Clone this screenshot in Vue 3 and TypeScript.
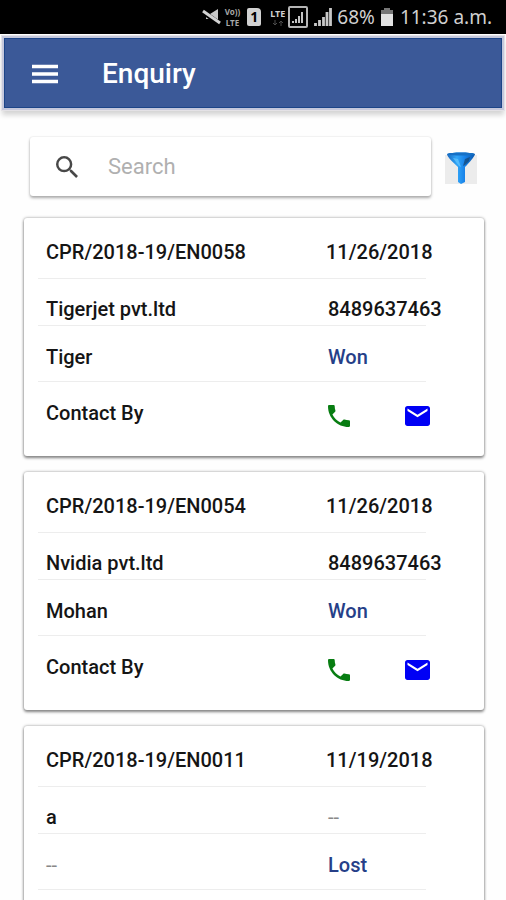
<script setup lang="ts">
import { ref } from 'vue'

interface Enquiry {
  code: string
  date: string
  company: string
  phone: string
  person: string
  status: string
}

const query = ref('')

const enquiries: Enquiry[] = [
  { code: 'CPR/2018-19/EN0058', date: '11/26/2018', company: 'Tigerjet pvt.ltd', phone: '8489637463', person: 'Tiger', status: 'Won' },
  { code: 'CPR/2018-19/EN0054', date: '11/26/2018', company: 'Nvidia pvt.ltd', phone: '8489637463', person: 'Mohan', status: 'Won' },
  { code: 'CPR/2018-19/EN0011', date: '11/19/2018', company: 'a', phone: '--', person: '--', status: 'Lost' },
]
</script>

<template>
  <div class="screen">
    <div class="status-bar">
      <svg class="mute" width="20" height="18" viewBox="0 0 20 18" aria-hidden="true">
        <path d="M4 6h4l8-5v14l-8-4H4z" fill="#c9c9c9" />
        <path d="M1 4l17 12" stroke="#000" stroke-width="5" />
        <path d="M1 3l17 12" stroke="#d2d2d2" stroke-width="3" />
      </svg>
      <span class="network volte"><span>Vo))</span><span>LTE</span></span>
      <span class="sim">1</span>
      <span class="network lte"><span>LTE</span>
        <svg width="12" height="6" viewBox="0 0 12 6" aria-hidden="true">
          <path d="M3 0v5M1 3l2 2 2-2M9 6V1M7 3l2-2 2 2" stroke="#4c4c4c" fill="none" />
        </svg>
      </span>
      <svg class="boxed" width="20" height="22" viewBox="0 0 20 22" aria-hidden="true">
        <rect x="1" y="1" width="18" height="20" rx="1" fill="none" stroke="#b5b5b5" stroke-width="2" />
        <path d="M5 17v-2M8 17v-4M11 17v-7M14 17V6" stroke="#c4c4c4" stroke-width="2" />
      </svg>
      <svg class="signal" width="18" height="18" viewBox="0 0 18 18" aria-hidden="true">
        <path d="M1.5 18v-3M5.500 18v-6M9.500 18V9M13 18V4M16.500 18V0" stroke="#c8c8c8" stroke-width="2.800" />
      </svg>
      <span class="percent">68%</span>
      <svg class="battery" width="12" height="18" viewBox="0 0 12 18" aria-hidden="true">
        <path d="M3 0h6v2h3v4H0V2h3z" fill="#777" />
        <path d="M0 6h12v12H0z" fill="#e2e2e2" />
      </svg>
      <time class="clock">11:36 a.m.</time>
    </div>

    <header class="app-bar">
      <button class="icon-button" type="button" aria-label="Menu">
        <svg width="28" height="20" viewBox="0 0 28 20">
          <path d="M1 2.500h26M1 10h26M1 17.500h26" stroke="#fff" stroke-width="3.500" />
        </svg>
      </button>
      <h1>Enquiry</h1>
    </header>

    <main>
      <div class="tools">
        <label class="search">
          <svg width="22" height="22" viewBox="3 3 17.500 17.500" aria-hidden="true">
            <path fill="#484848" d="M15.500 14h-.79l-.28-.27A6.471 6.471 0 0 0 16 9.500 6.500 6.500 0 1 0 9.500 16c1.610 0 3.090-.59 4.230-1.570l.27.28v.79l5 4.990L20.490 19l-4.990-5zm-6 0C7.010 14 5 11.990 5 9.500S7.010 5 9.500 5 14 7.010 14 9.500 11.990 14 9.500 14z" />
          </svg>
          <input v-model="query" type="text" placeholder="Search" aria-label="Search" />
        </label>
        <button class="filter" type="button" aria-label="Filter">
          <svg width="32" height="36" viewBox="0 -3 32 36">
            <defs>
              <linearGradient id="cone" x1="0" x2="1">
                <stop offset="0" stop-color="#1868c0" />
                <stop offset=".35" stop-color="#32a6f8" />
                <stop offset=".65" stop-color="#1680e8" />
                <stop offset="1" stop-color="#0b58ac" />
              </linearGradient>
            </defs>
            <path fill="#ececec" d="M0 3h32v29H0z" />
            <path fill="url(#cone)" d="M2 2C6 0 26 0 30 2c0 2-6 9-10 13v15l-4 2-3-2V15C9 11 2 5 2 2z" />
            <path fill="#1670c5" d="M2 2C6 0 26 0 30 2c-3 2-25 2-28 0z" />
            <path fill="#15456f" d="M20 7l5-2-1 4-4 4-2 1z" opacity=".7" />
            <path fill="#65c7ff" d="M8 6l5 1 3 8-2-1z" opacity=".7" />
          </svg>
        </button>
      </div>

      <article v-for="item in enquiries" :key="item.code" class="card">
        <div class="row code-row">
          <span>{{ item.code }}</span>
          <time class="date">{{ item.date }}</time>
        </div>
        <div class="row company-row">
          <span :class="{ empty: item.company === '--' }">{{ item.company }}</span>
          <span :class="{ empty: item.phone === '--' }">{{ item.phone }}</span>
        </div>
        <div class="row person-row">
          <span :class="{ empty: item.person === '--' }">{{ item.person }}</span>
          <span class="outcome">{{ item.status }}</span>
        </div>
        <div class="row contact-row">
          <span>Contact By</span>
          <div class="actions">
            <button type="button" aria-label="Call">
              <svg width="22" height="22" viewBox="3 3 18 18">
                <path fill="#087d12" d="M6.620 10.790c1.440 2.830 3.760 5.140 6.590 6.590l2.200-2.200c.27-.27.67-.36 1.020-.24 1.120.37 2.330.57 3.570.57.55 0 1 .45 1 1V20c0 .55-.45 1-1 1-9.390 0-17-7.610-17-17 0-.55.45-1 1-1h3.500c.55 0 1 .45 1 1 0 1.250.2 2.450.57 3.570.11.35.03.74-.25 1.020l-2.200 2.200z" />
              </svg>
            </button>
            <button type="button" aria-label="Email">
              <svg width="25" height="20" viewBox="2 4 20 16">
                <path fill="#0000f5" d="M20 4H4c-1.100 0-1.990.9-1.990 2L2 18c0 1.100.9 2 2 2h16c1.100 0 2-.9 2-2V6c0-1.100-.9-2-2-2zm0 4l-8 5-8-5V6l8 5 8-5v2z" />
              </svg>
            </button>
          </div>
        </div>
      </article>
    </main>
  </div>
</template>

<style>
body {
  margin: 0;
  background: #fefefe;
}
</style>

<style scoped>
.screen {
  display: flex;
  flex-direction: column;
  height: 100vh;
  font-family: Roboto, "Liberation Sans", sans-serif;
  color: #151515;
}

button {
  display: flex;
  padding: 0;
  border: 0;
  background: none;
}

.status-bar {
  display: flex;
  flex: none;
  align-items: center;
  justify-content: flex-end;
  height: 34px;
  padding-right: 14px;
  background: #000;
  color: #d0d0d0;
  font-family: "Noto Sans", sans-serif;
  font-size: 19px;
}

.network {
  display: flex;
  flex-direction: column;
  align-items: center;
  font-size: 9px;
  font-weight: 700;
  line-height: 9px;
}

.volte {
  margin-left: 3px;
  color: #a8a8a8;
  font-size: 8px;
  line-height: 11px;
}

.sim {
  width: 14px;
  margin-left: 7px;
  border-radius: 2px 4px 2px 2px;
  background: #d2d2d2;
  color: #000;
  font-size: 14px;
  font-weight: 700;
  line-height: 18px;
  text-align: center;
}

.lte {
  gap: 2px;
  margin-left: 9px;
}

.boxed {
  margin-left: 3px;
}

.signal {
  margin-left: 6px;
}

.percent {
  margin-left: 5px;
}

.battery {
  margin-left: 6px;
}

.clock {
  margin-left: 7px;
}

.app-bar {
  display: flex;
  flex: none;
  align-items: center;
  gap: 43px;
  box-sizing: border-box;
  height: 74px;
  margin: 2px 2px 0;
  padding: 2px 0 0 27px;
  border: 2px solid #c5c8dc;
  outline: 1px solid #e4e2e6;
  background: #3b5998;
  box-shadow: inset 0 0 0 1px #1c4488, 0 5px 5px #d4d4d4;
}

h1 {
  margin: 0;
  color: #fff;
  font-size: 28px;
  font-weight: 500;
  line-height: 32px;
}

main {
  display: flex;
  flex: 1;
  flex-direction: column;
  gap: 16px;
  min-height: 0;
  padding: 27px 22px 16px 24px;
  overflow-y: auto;
  scrollbar-width: none;
}

.tools {
  display: flex;
  flex: none;
  align-items: center;
  gap: 14px;
  margin-bottom: 6px;
  padding: 0 7px 0 6px;
}

.search {
  display: flex;
  flex: 1;
  align-items: center;
  gap: 30px;
  height: 59px;
  padding-left: 26px;
  border-radius: 3px;
  background: #fff;
  box-shadow: 0 2px 3px #aaa, 0 0 2px #ddd;
}

input {
  flex: 1;
  min-width: 0;
  padding: 0;
  border: 0;
  outline: 0;
  background: none;
  color: #333;
  font: 22px Roboto, sans-serif;
}

input::placeholder {
  color: #b0b0b0;
  opacity: 1;
}

.card {
  flex: none;
  padding: 0 58px 0 14px;
  border-radius: 3px;
  background: #fff;
  box-shadow: 0 2px 3px #888, 0 0 3px #999;
}

.row {
  display: grid;
  grid-template-columns: 1fr 98px;
  padding-left: 8px;
  border-bottom: 1px solid #ededed;
  font-size: 20px;
  font-weight: 500;
  line-height: 24px;
  white-space: nowrap;
}

.code-row {
  grid-template-columns: 1fr 100px;
  padding-top: 22px;
  padding-bottom: 14px;
}

.company-row {
  padding-top: 18px;
  padding-bottom: 4px;
}

.person-row {
  padding-top: 19px;
  padding-bottom: 12px;
}

.contact-row {
  padding-top: 19px;
  padding-bottom: 31px;
  border-bottom: 0;
}

.outcome {
  color: #263f88;
}

.empty {
  color: #888;
  font-weight: 400;
}

.actions {
  display: flex;
  align-items: center;
  gap: 55px;
  height: 30px;
  margin-bottom: -6px;
}
</style>
